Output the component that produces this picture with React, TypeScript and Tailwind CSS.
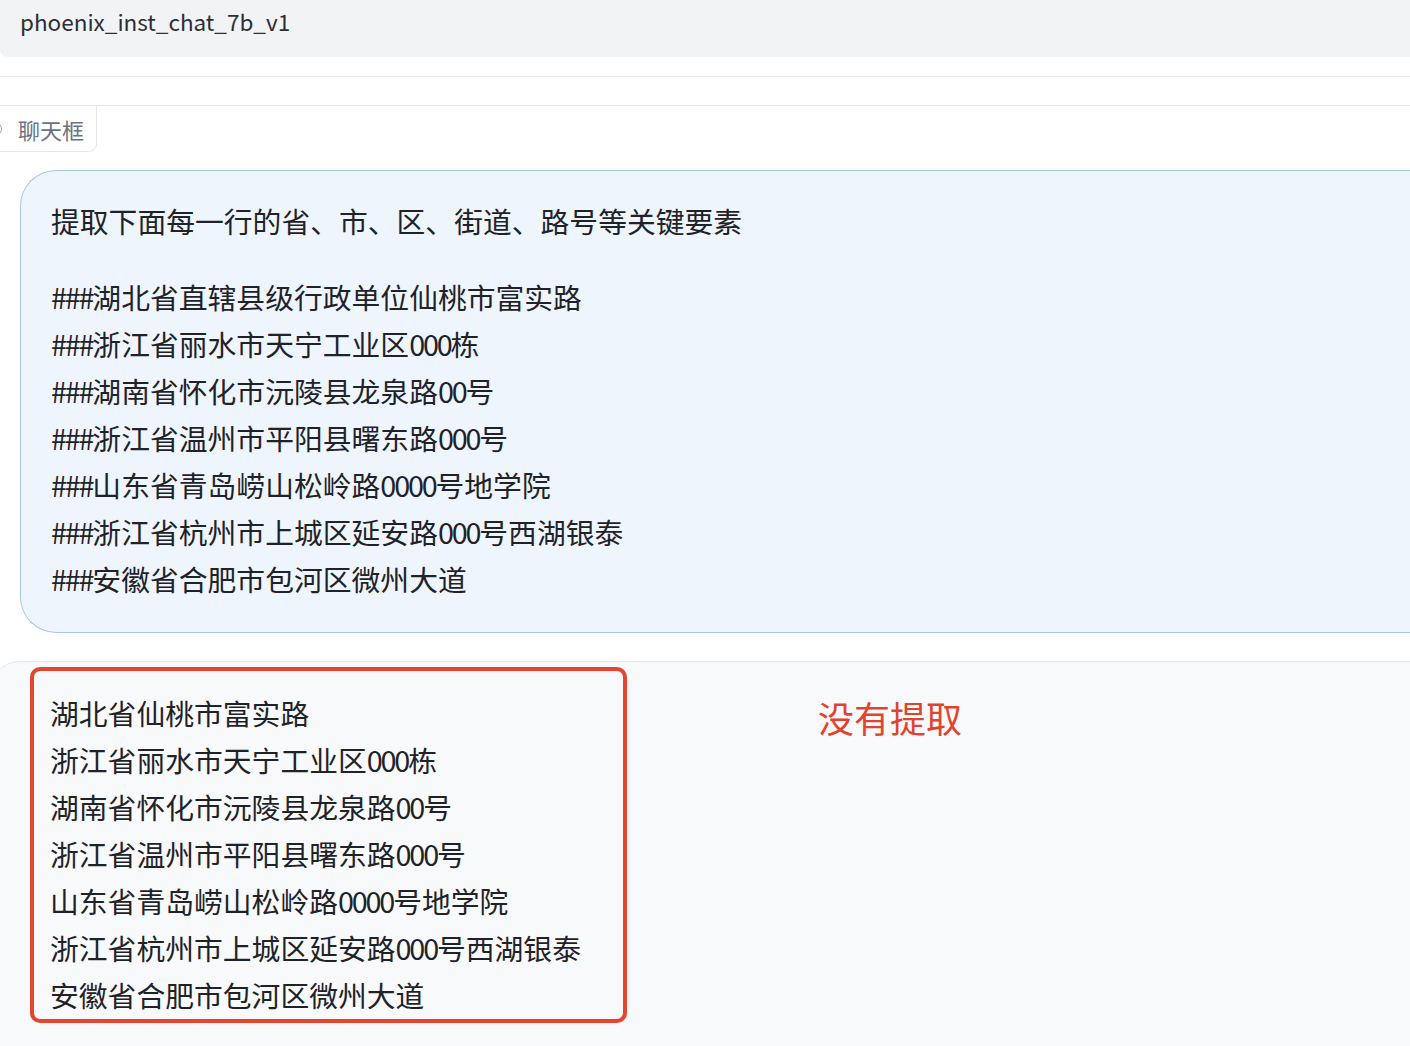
const userLines = [
  "###湖北省直辖县级行政单位仙桃市富实路",
  "###浙江省丽水市天宁工业区000栋",
  "###湖南省怀化市沅陵县龙泉路00号",
  "###浙江省温州市平阳县曙东路000号",
  "###山东省青岛崂山松岭路0000号地学院",
  "###浙江省杭州市上城区延安路000号西湖银泰",
  "###安徽省合肥市包河区微州大道",
];

const botLines = [
  "湖北省仙桃市富实路",
  "浙江省丽水市天宁工业区000栋",
  "湖南省怀化市沅陵县龙泉路00号",
  "浙江省温州市平阳县曙东路000号",
  "山东省青岛崂山松岭路0000号地学院",
  "浙江省杭州市上城区延安路000号西湖银泰",
  "安徽省合肥市包河区微州大道",
];

// ascii runs are a bit narrower in the original font
function Line({ text }: { text: string }) {
  const parts = text.split(/([\x00-\x7f]+)/).filter(Boolean);
  return (
    <p>
      {parts.map((p, i) =>
        /^[\x00-\x7f]+$/.test(p) ? (
          <span key={i} className="tracking-[-2.2px]">
            {p}
          </span>
        ) : (
          <span key={i}>{p}</span>
        )
      )}
    </p>
  );
}

export default function App() {
  return (
    <div
      className="relative h-[1046px] w-[1410px] overflow-hidden bg-white text-[#1f2328]"
      style={{ fontFamily: '"Noto Sans CJK SC", "Noto Sans", sans-serif' }}
    >
      {/* model name bar */}
      <div className="flex h-[57px] items-start rounded-bl-lg bg-[#f2f3f5] pl-[20px] pt-[5px]">
        <span className="text-[22.5px] leading-[33px] text-[#2b2f36]">phoenix_inst_chat_7b_v1</span>
      </div>

      <div className="h-[19px]" />
      <div className="h-[29px] border-t border-[#e5e7eb]" />

      {/* tab */}
      <div className="border-t border-[#e5e7eb]">
        <div className="flex h-[46px] w-[97px] items-center rounded-br-lg border-r border-b border-[#e5e7eb] bg-white">
          <span className="-ml-[12px] h-[14px] w-[14px] rounded-full border border-[#9ca3af]" />
          <span className="ml-[16px] text-[22px] leading-none text-[#6b7280]">聊天框</span>
        </div>
      </div>

      {/* user message */}
      <div className="ml-[20px] mt-[18px] w-[1420px] rounded-l-[36px] border border-r-0 border-[#a9c6e6] bg-[#eef5fd] pb-[30px] pl-[30px] pt-[26px] text-[28.8px] leading-[47px]">
        <p>提取下面每一行的省、市、区、街道、路号等关键要素</p>
        <div className="mt-[29px]">
          {userLines.map((l) => (
            <Line key={l} text={l} />
          ))}
        </div>
      </div>

      {/* bot message */}
      <div className="-ml-[10px] mt-[28px] flex h-[420px] w-[1430px] items-start rounded-tl-[30px] border-t border-[#e5e7eb] bg-[#f8f9fb] pl-[40px] pt-[5px]">
        <div className="h-[356px] w-[597px] rounded-[10px] border-4 border-[#e5442f] pl-[16px] pt-[18px] text-[28.8px] leading-[47px]">
          {botLines.map((l) => (
            <Line key={l} text={l} />
          ))}
        </div>
        <span className="ml-[191px] mt-[27px] text-[36px] leading-[47px] text-[#e0442e]">没有提取</span>
      </div>
    </div>
  );
}
